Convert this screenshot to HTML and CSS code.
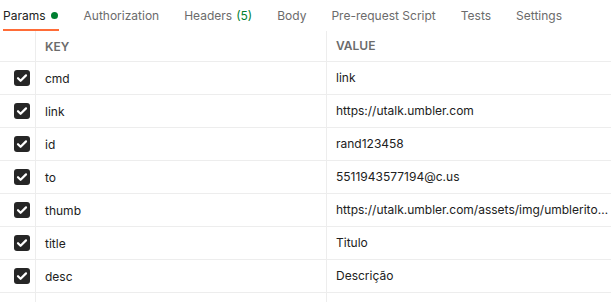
FILE: index.html
```html
<!DOCTYPE html>
<html lang="en">
<head>
  <meta charset="UTF-8">
  <meta name="viewport" content="width=device-width, initial-scale=1.0">
  <title>Params</title>
  <link rel="stylesheet" href="styles.css">
</head>
<body>
  <div class="tabs">
    <div class="tab active">Params <span class="dot"></span></div>
    <div class="tab">Authorization</div>
    <div class="tab">Headers <span class="count">(5)</span></div>
    <div class="tab">Body</div>
    <div class="tab">Pre-request Script</div>
    <div class="tab">Tests</div>
    <div class="tab">Settings</div>
  </div>

  <div class="table">
    <div class="row head">
      <div class="cell check"></div>
      <div class="cell key">KEY</div>
      <div class="cell value">VALUE</div>
    </div>
    <div class="row">
      <div class="cell check"><span class="box"><svg viewBox="0 0 16 16"><path d="M4 8.2l2.6 2.6L12 5.4"/></svg></span></div>
      <div class="cell key">cmd</div>
      <div class="cell value">link</div>
    </div>
    <div class="row">
      <div class="cell check"><span class="box"><svg viewBox="0 0 16 16"><path d="M4 8.2l2.6 2.6L12 5.4"/></svg></span></div>
      <div class="cell key">link</div>
      <div class="cell value">https://utalk.umbler.com</div>
    </div>
    <div class="row">
      <div class="cell check"><span class="box"><svg viewBox="0 0 16 16"><path d="M4 8.2l2.6 2.6L12 5.4"/></svg></span></div>
      <div class="cell key">id</div>
      <div class="cell value">rand123458</div>
    </div>
    <div class="row">
      <div class="cell check"><span class="box"><svg viewBox="0 0 16 16"><path d="M4 8.2l2.6 2.6L12 5.4"/></svg></span></div>
      <div class="cell key">to</div>
      <div class="cell value">5511943577194@c.us</div>
    </div>
    <div class="row">
      <div class="cell check"><span class="box"><svg viewBox="0 0 16 16"><path d="M4 8.2l2.6 2.6L12 5.4"/></svg></span></div>
      <div class="cell key">thumb</div>
      <div class="cell value">https://utalk.umbler.com/assets/img/umblerito-logo.png</div>
    </div>
    <div class="row">
      <div class="cell check"><span class="box"><svg viewBox="0 0 16 16"><path d="M4 8.2l2.6 2.6L12 5.4"/></svg></span></div>
      <div class="cell key">title</div>
      <div class="cell value">Titulo</div>
    </div>
    <div class="row">
      <div class="cell check"><span class="box"><svg viewBox="0 0 16 16"><path d="M4 8.2l2.6 2.6L12 5.4"/></svg></span></div>
      <div class="cell key">desc</div>
      <div class="cell value">Descrição</div>
    </div>
    <div class="row">
      <div class="cell check"></div>
      <div class="cell key"></div>
      <div class="cell value"></div>
    </div>
  </div>
</body>
</html>
```

FILE: styles.css
```css
* {
  box-sizing: border-box;
}
body {
  margin: 0;
  font-family: Inter, "Noto Sans", sans-serif;
  font-size: 12px;
  color: #212121;
  background: #fff;
  overflow: hidden;
}
.tabs {
  display: flex;
  height: 31px;
  padding-left: 3px;
  gap: 25px;
}
.tab {
  display: flex;
  align-items: center;
  color: #6b6b6b;
  white-space: nowrap;
  height: 31px;
  padding-top: 2px;
  border-bottom: 2px solid transparent;
}
.tab.active {
  color: #212121;
  border-bottom-color: #ff6c37;
  padding-right: 1px;
}
.dot {
  display: inline-block;
  width: 7px;
  height: 7px;
  border-radius: 50%;
  background: #007f31;
  margin-left: 5px;
}
.count {
  color: #007f31;
  margin-left: 4px;
}
.row {
  display: grid;
  grid-template-columns: 36px 291px 1fr;
  height: 33px;
  border-bottom: 1px solid #ededed;
}
.row.head {
  height: 31px;
}
.cell {
  display: flex;
  align-items: center;
  min-width: 0;
  overflow: hidden;
  white-space: nowrap;
}
.cell.check,
.cell.key {
  border-right: 1px solid #ededed;
}
.cell.check {
  padding-left: 14px;
}
.cell.key {
  padding-left: 9px;
}
.cell.value {
  padding-left: 9px;
  padding-right: 0;
  display: block;
  line-height: 32px;
  text-overflow: ellipsis;
}
.head .cell {
  font-size: 12px;
  font-weight: 600;
  color: #6b6b6b;
}
.head .cell.value {
  line-height: 30px;
}
.box {
  display: flex;
  width: 16px;
  height: 16px;
  border-radius: 3px;
  background: #262626;
}
.box svg {
  width: 16px;
  height: 16px;
  fill: none;
  stroke: #fff;
  stroke-width: 2.2;
  stroke-linecap: round;
  stroke-linejoin: round;
}
```
